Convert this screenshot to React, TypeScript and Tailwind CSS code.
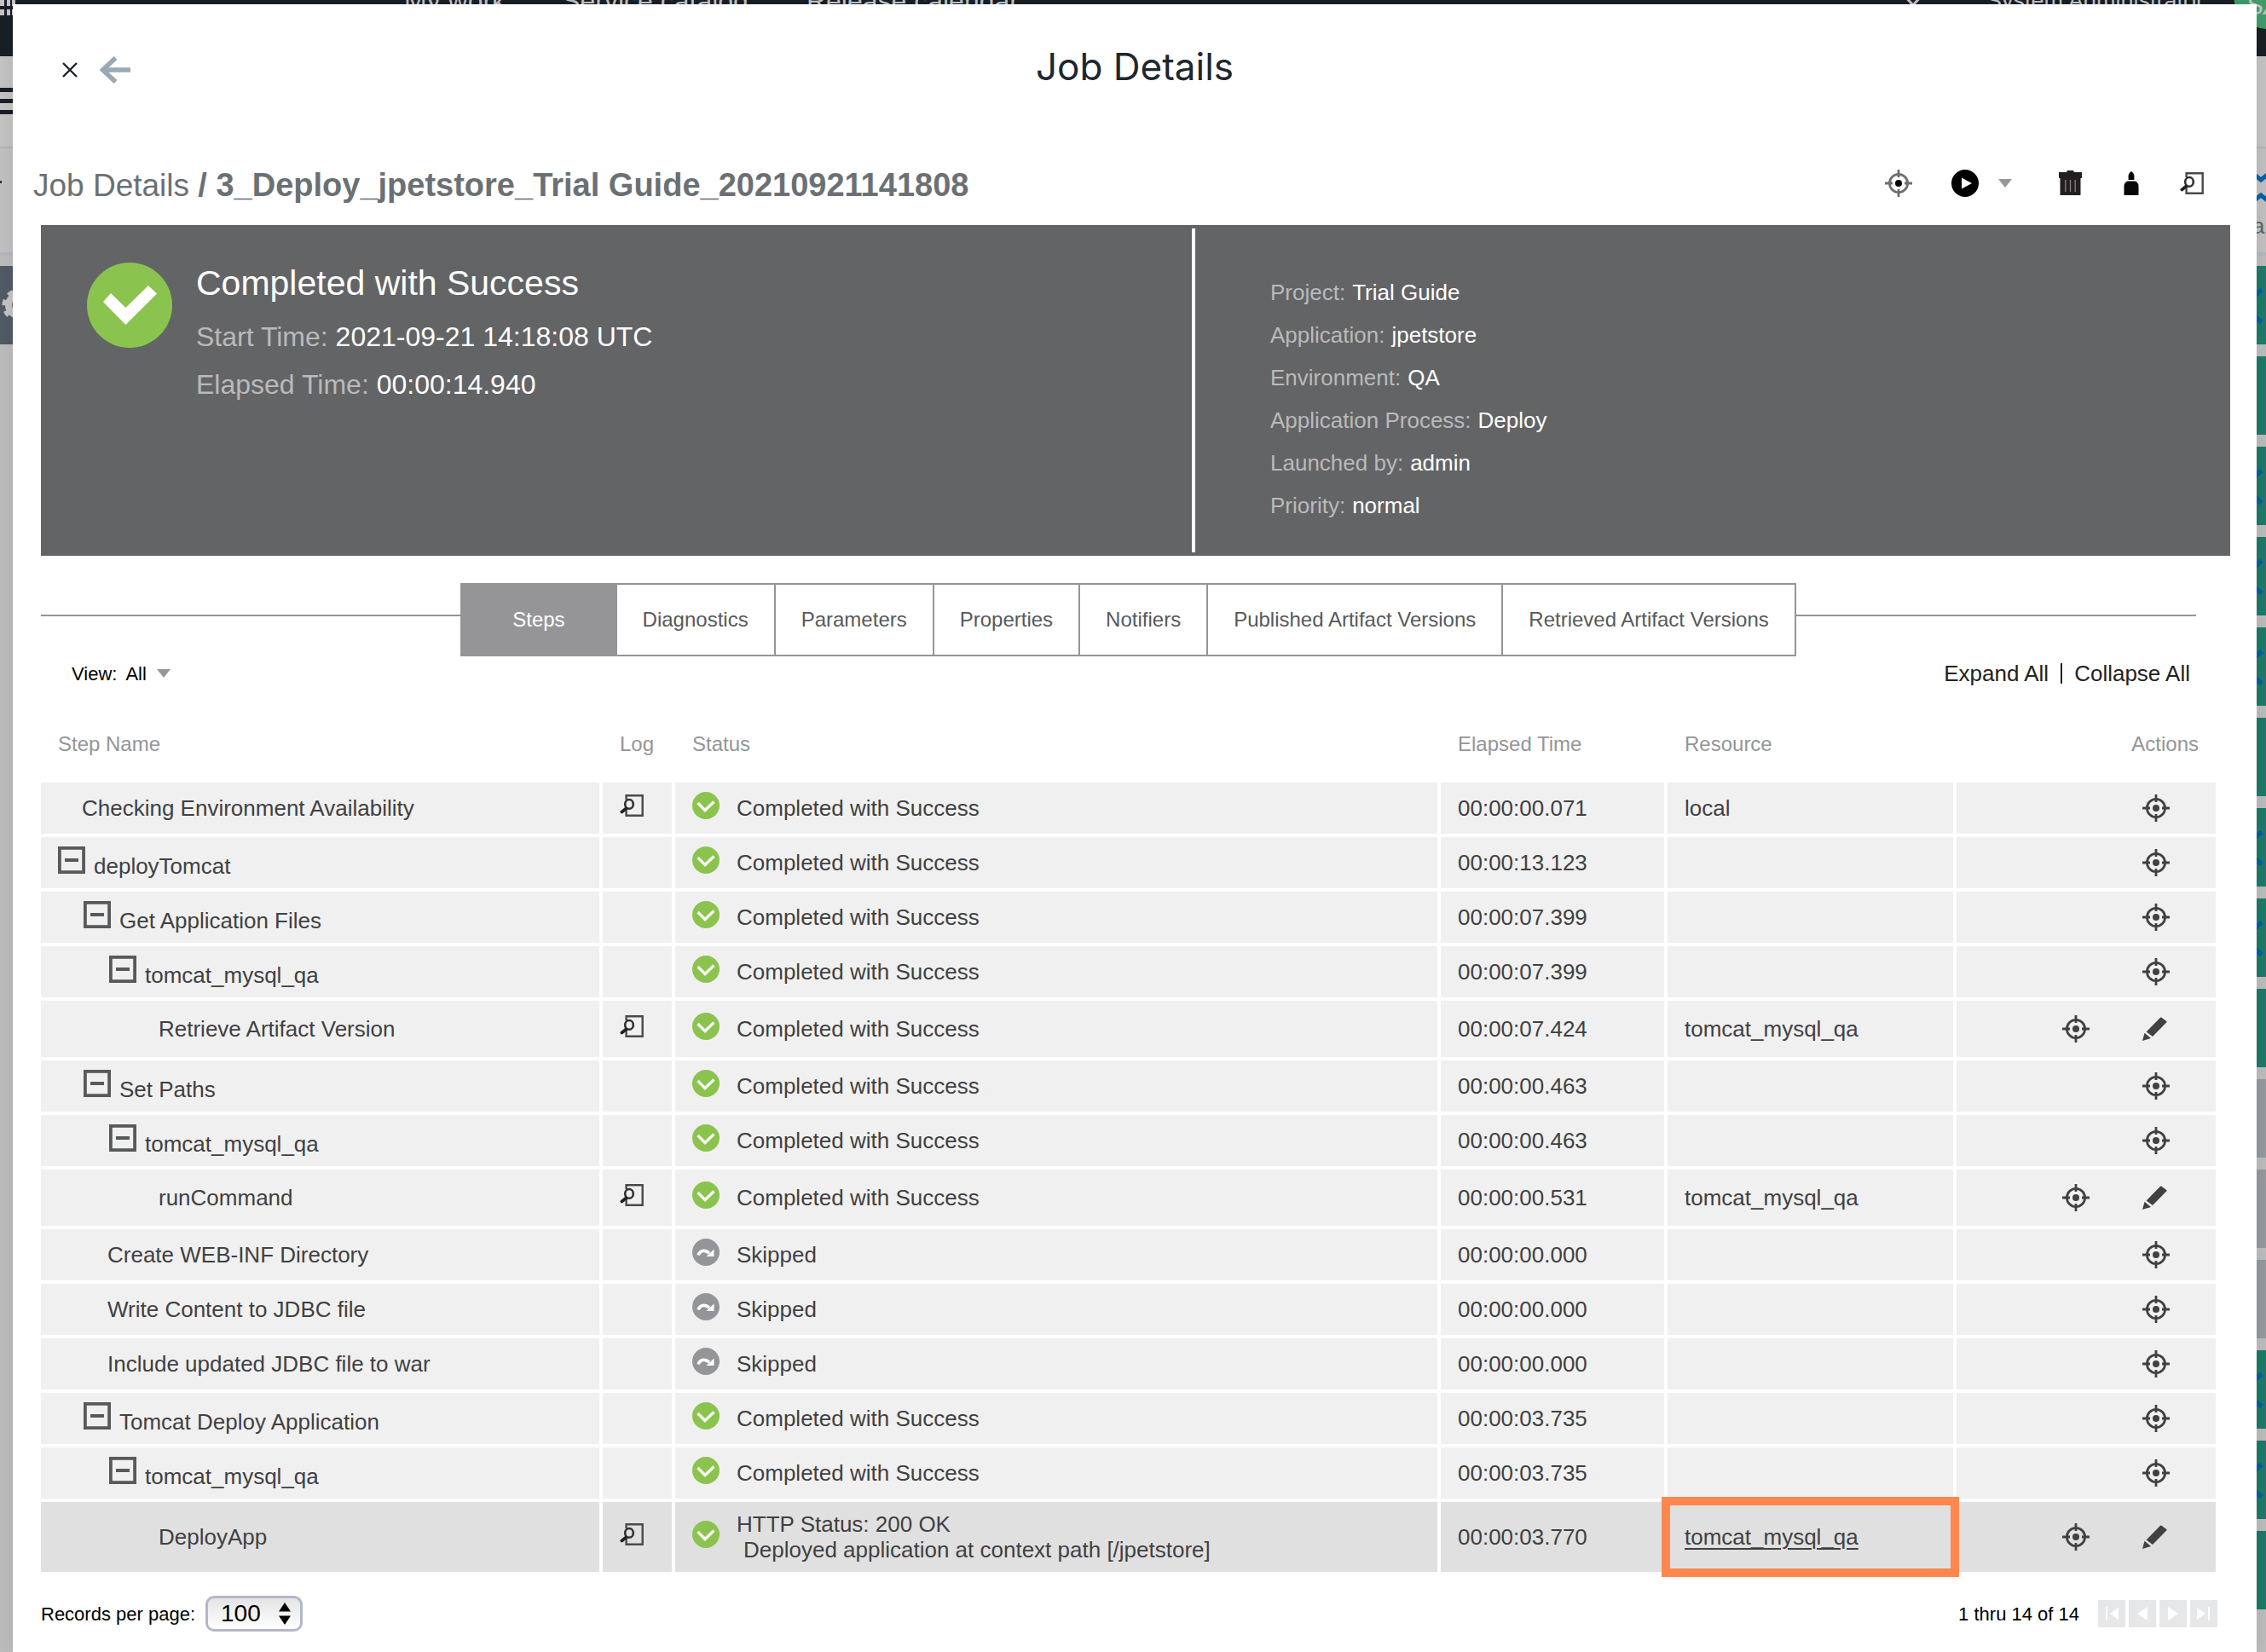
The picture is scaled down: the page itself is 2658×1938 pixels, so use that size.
import type { ReactNode } from "react";

type Step = {
  name: string;
  level: number;
  group?: boolean;
  log?: boolean;
  status: "success" | "skipped";
  message?: string[];
  elapsed: string;
  resource?: string;
  editable?: boolean;
  selected?: boolean;
};

const steps: Step[] = [
  { name: "Checking Environment Availability", level: 0, log: true, status: "success", elapsed: "00:00:00.071", resource: "local" },
  { name: "deployTomcat", level: 0, group: true, status: "success", elapsed: "00:00:13.123" },
  { name: "Get Application Files", level: 1, group: true, status: "success", elapsed: "00:00:07.399" },
  { name: "tomcat_mysql_qa", level: 2, group: true, status: "success", elapsed: "00:00:07.399" },
  { name: "Retrieve Artifact Version", level: 3, log: true, status: "success", elapsed: "00:00:07.424", resource: "tomcat_mysql_qa", editable: true },
  { name: "Set Paths", level: 1, group: true, status: "success", elapsed: "00:00:00.463" },
  { name: "tomcat_mysql_qa", level: 2, group: true, status: "success", elapsed: "00:00:00.463" },
  { name: "runCommand", level: 3, log: true, status: "success", elapsed: "00:00:00.531", resource: "tomcat_mysql_qa", editable: true },
  { name: "Create WEB-INF Directory", level: 1, status: "skipped", elapsed: "00:00:00.000" },
  { name: "Write Content to JDBC file", level: 1, status: "skipped", elapsed: "00:00:00.000" },
  { name: "Include updated JDBC file to war", level: 1, status: "skipped", elapsed: "00:00:00.000" },
  { name: "Tomcat Deploy Application", level: 1, group: true, status: "success", elapsed: "00:00:03.735" },
  { name: "tomcat_mysql_qa", level: 2, group: true, status: "success", elapsed: "00:00:03.735" },
  {
    name: "DeployApp",
    level: 3,
    log: true,
    status: "success",
    message: ["HTTP Status: 200 OK", "Deployed application at context path [/jpetstore]"],
    elapsed: "00:00:03.770",
    resource: "tomcat_mysql_qa",
    editable: true,
    selected: true,
  },
];

const groupIndent = ["pl-[20px]", "pl-[50px]", "pl-[80px]", "pl-[110px]"];
const leafIndent = ["pl-[48px]", "pl-[78px]", "pl-[108px]", "pl-[138px]"];

const details: [string, string][] = [
  ["Project", "Trial Guide"],
  ["Application", "jpetstore"],
  ["Environment", "QA"],
  ["Application Process", "Deploy"],
  ["Launched by", "admin"],
  ["Priority", "normal"],
];

const tabs = [
  "Diagnostics",
  "Parameters",
  "Properties",
  "Notifiers",
  "Published Artifact Versions",
  "Retrieved Artifact Versions",
];

/* ---------- icons ---------- */

function Target({ ring = "#414042", dot = "#414042" }: { ring?: string; dot?: string }) {
  return (
    <svg viewBox="0 0 32 32" className="size-8 shrink-0" fill="none">
      <circle cx="16" cy="16" r="10.6" stroke={ring} strokeWidth="2.8" />
      <path d="M16 0v9M16 23v9M0 16h9M23 16h9" stroke={ring} strokeWidth="2.8" />
      <circle cx="16" cy="16" r="4" fill={dot} />
    </svg>
  );
}

function Pencil() {
  return (
    <svg viewBox="0 0 32 28" className="h-7 w-8 shrink-0" fill="#414042">
      <path d="M4.6 17.6 21 0.8Q21.8 0 22.6.8L28.2 5Q29 5.8 28.2 6.6L12 23Z" />
      <path d="M0 28 2.6 18.8 10 25Z" />
    </svg>
  );
}

function LogIcon() {
  return (
    <svg viewBox="0 0 28 26" className="h-[26px] w-7 shrink-0" fill="none">
      <path d="M7.6 6V1.3H26.7V24.7H7.6V18" stroke="#4a4a4a" strokeWidth="2.4" />
      <ellipse cx="11" cy="11.4" rx="4.8" ry="5.4" stroke="#333" strokeWidth="2.6" />
      <path d="M7.4 16.6 2.4 20.4" stroke="#222" strokeWidth="3.8" strokeLinecap="round" />
    </svg>
  );
}

function Trash() {
  return (
    <svg viewBox="0 0 29 30" className="h-[30px] w-[29px] shrink-0" fill="#231f20">
      <path d="M10.5 0h8v2H28v7H1V2h9.500Z" />
      <path d="M2.500 8h24v21h-24Z" />
      <path d="M8.800 11v14M14.500 11v14M20.200 11v14" stroke="#858384" strokeWidth="1.300" />
    </svg>
  );
}

function Bottle() {
  return (
    <svg viewBox="0 0 18 28" className="h-7 w-[18px] shrink-0" fill="#060606">
      <path d="M9 0C10.800 1 12 2.800 12.400 5V10H5.600V5C6 2.800 7.200 1 9 0Z" />
      <path d="M4.500 11.500h9Q17.500 13.500 17.500 17V28H.5V17Q.5 13.500 4.500 11.500Z" />
    </svg>
  );
}

function PlayIcon() {
  return (
    <svg viewBox="0 0 32 32" className="size-8 shrink-0">
      <circle cx="16" cy="16" r="16" />
      <path d="M12 9.500 24 16 12 22.500Z" fill="#fff" />
    </svg>
  );
}

function Caret() {
  return (
    <svg viewBox="0 0 16 10" className="h-2.5 w-4 shrink-0">
      <path d="M0 0h16L8 10Z" fill="#979797" />
    </svg>
  );
}

function StatusIcon({ status }: { status: Step["status"] }) {
  if (status === "skipped") {
    return (
      <svg viewBox="0 0 32 32" className="mb-1.5 size-8 shrink-0" fill="none">
        <circle cx="16" cy="16" r="16" fill="#939598" />
        <path d="M7 19.500C9 14 14.500 12.500 20 17" stroke="#fff" strokeWidth="3.600" />
        <path d="M25.500 12.500V21H16.500Z" fill="#fff" />
      </svg>
    );
  }
  return (
    <svg viewBox="0 0 32 32" className="mb-1.5 size-8 shrink-0" fill="none">
      <circle cx="16" cy="16" r="16" fill="#8bc34f" />
      <path d="M6.500 13 15 21.500 25.500 11.500" stroke="#f4f8ee" strokeWidth="3.400" />
    </svg>
  );
}

function CollapseBox() {
  return (
    <svg viewBox="0 0 32 32" className="size-8 shrink-0" fill="none">
      <rect x="1.900" y="1.900" width="28.200" height="28.200" stroke="#58595b" strokeWidth="3.800" />
      <path d="M8 16h16" stroke="#58595b" strokeWidth="4" />
    </svg>
  );
}

/* ---------- page behind the dialog ---------- */

const lanes = [
  "linked", "plain", "linked", "linked", "linked", "plain", "linked", "linked",
  "plain", "idle", "idle", "idle", "linked", "linked", "plain",
];

function Backdrop() {
  return (
    <div aria-hidden="true" className="absolute inset-0 flex flex-col overflow-hidden bg-[#bcbcbc]">
      <div className="flex h-[66px] shrink-0 items-start overflow-hidden bg-[#181f27] text-[32px] leading-8 text-[#c4c4c4]">
        <svg viewBox="0 0 18 18" className="size-[18px] shrink-0" fill="#c4c4c4">
          <path d="M0 0h5v7H0zM8 0h4v7H8zM14 0h4v7h-4zM0 11h5v7H0zM8 11h4v7H8zM14 11h4v7h-4z" />
        </svg>
        <span className="-mt-[15px] ml-[456px]">My work</span>
        <span className="-mt-[15px] ml-[66px]">Service catalog</span>
        <span className="-mt-[15px] ml-[68px]">Release calendar</span>
        <svg viewBox="0 0 30 16" className="-mt-2 ml-auto h-4 w-[30px] shrink-0" fill="none">
          <path d="M2 0 15 14 28 0" stroke="#c4c4c4" strokeWidth="3" />
        </svg>
        <span className="-mt-[15px] ml-[71px] shrink-0 text-[27px]">System Administrator</span>
        <div className="-mt-[46px] -mr-[42px] ml-[35px] flex size-20 shrink-0 items-end rounded-full bg-[#3f9c68] pb-3 pl-3.5">
          <span className="italic">SA</span>
        </div>
      </div>
      <div className="flex h-[108px] shrink-0 flex-col justify-center gap-2 border-b-2 border-[#b4b4b4] bg-[#c3c3c3] pb-px">
        <div className="h-[5px] w-10 bg-[#181f27]" />
        <div className="h-[5px] w-10 bg-[#181f27]" />
        <div className="h-[5px] w-10 bg-[#181f27]" />
      </div>
      <div className="flex h-[126px] shrink-0 justify-between border-b-4 border-[#b1b7bc] bg-[#c0c0c0]">
        <div className="mt-[38px] h-[3px] w-0.5 bg-[#333]" />
        <div className="flex w-[16px] flex-col overflow-hidden pt-[26px]">
          <svg viewBox="0 0 16 40" className="h-10 w-4 shrink-0" fill="none">
            <path d="M0 3 10 11 20 3M0 37 10 29 20 37" stroke="#0562a4" strokeWidth="5" />
          </svg>
          <span className="text-[26px] leading-[50px] text-[#5b646d]">ar</span>
        </div>
      </div>
      <div className="flex grow justify-between pt-3">
        <div className="flex h-[92px] w-10 items-center bg-[#525a65]">
          <svg viewBox="0 0 40 40" className="size-10" fill="none">
            <circle cx="22" cy="20" r="12" stroke="#c4c4c4" strokeWidth="8" />
            <circle cx="22" cy="20" r="17" stroke="#c4c4c4" strokeWidth="5" strokeDasharray="6.600 6.600" />
          </svg>
        </div>
        <div className="flex w-5 flex-col gap-3.5">
          {lanes.map((kind, i) => (
            <div key={i} className={kind === "idle" ? "h-[92px] bg-[#93999d]" : "h-[92px] bg-[#1e7a69]"}>
              {kind === "linked" && (
                <svg viewBox="0 0 20 92" className="h-full w-full" fill="none">
                  <path d="M5 36 15 28M5 58 15 66" stroke="#05609e" strokeWidth="6" />
                </svg>
              )}
            </div>
          ))}
        </div>
      </div>
    </div>
  );
}

/* ---------- dialog parts ---------- */

function IconButton({ label, children }: { label: string; children: ReactNode }) {
  return (
    <button type="button" aria-label={label} className="flex shrink-0 items-center justify-center">
      {children}
    </button>
  );
}

function Summary() {
  return (
    <section className="mr-[31px] ml-[33px] grid h-[388px] grid-cols-[1350fr_4px_1214fr] bg-[#636466] text-white">
      <div className="flex items-start gap-7 pt-10 pl-[54px]">
        <svg viewBox="0 0 100 100" className="mt-1 size-[100px] shrink-0">
          <circle cx="50" cy="50" r="50" fill="#8bc34f" />
          <path d="M19 46 28 36 45.400 53 72 27 82 36.500 45.400 73Z" fill="#fff" />
        </svg>
        <div className="text-[32px] leading-[56px]">
          <h2 className="mb-[7px] text-[41px] leading-[56px]">Completed with Success</h2>
          <p>
            <span className="text-[#b9babb]">Start Time:</span> 2021-09-21 14:18:08 UTC
          </p>
          <p>
            <span className="text-[#b9babb]">Elapsed Time:</span> 00:00:14.940
          </p>
        </div>
      </div>
      <div className="my-1 bg-white" />
      <dl className="pt-[54px] pl-[88px] text-[26px] leading-[50px]">
        {details.map(([label, value]) => (
          <div key={label} className="flex gap-2">
            <dt className="text-[#b9babb]">{label}:</dt>
            <dd>{value}</dd>
          </div>
        ))}
      </dl>
    </section>
  );
}

function TabBar() {
  return (
    <div className="mt-8 mr-[71px] ml-[33px] flex items-start">
      <div className="mt-[37px] h-0.5 flex-[492] bg-[#959597]" />
      <div role="tablist" className="flex h-[86px] border-y-2 border-[#959597] text-[24px] text-[#58595b]">
        <button type="button" role="tab" aria-selected="true" className="bg-[#959597] px-[61px] text-white">
          Steps
        </button>
        {tabs.map((tab) => (
          <button key={tab} type="button" role="tab" aria-selected="false" className="border-r-2 border-[#959597] px-[30px]">
            {tab}
          </button>
        ))}
      </div>
      <div className="mt-[37px] h-0.5 flex-[469] bg-[#959597]" />
    </div>
  );
}

function StepRow({ step }: { step: Step }) {
  const height = step.message ? "h-[86px]" : step.editable ? "h-[70px]" : "h-16";
  const cell = step.selected
    ? "border-b-4 border-r-4 border-white bg-[#e0e0e0] pl-5"
    : "border-b-4 border-r-4 border-white bg-[#f0f0f0] pl-5";
  const base = step.selected ? "border-b-4 border-white bg-[#e0e0e0]" : "border-b-4 border-white bg-[#f0f0f0]";
  return (
    <tr className={height}>
      <td className={`${base} border-r-4 ${step.group ? groupIndent[step.level] : leafIndent[step.level]}`}>
        {step.group ? (
          <button type="button" className="flex items-baseline gap-2.5">
            <CollapseBox />
            {step.name}
          </button>
        ) : (
          step.name
        )}
      </td>
      <td className={cell}>
        {step.log && (
          <div className="mb-1.5">
            <IconButton label="View log">
              <LogIcon />
            </IconButton>
          </div>
        )}
      </td>
      <td className={cell}>
        <div className="flex items-center gap-5">
          <StatusIcon status={step.status} />
          {step.message ? (
            <div>
              <p>{step.message[0]}</p>
              <p className="pl-2">{step.message[1]}</p>
            </div>
          ) : (
            <span>{step.status === "success" ? "Completed with Success" : "Skipped"}</span>
          )}
        </div>
      </td>
      <td className={cell}>{step.elapsed}</td>
      <td className={`relative ${cell}`}>
        {step.resource && (
          <a href="#resource" className={step.selected ? "underline decoration-2 underline-offset-4" : ""}>
            {step.resource}
          </a>
        )}
        {step.selected && (
          <div className="pointer-events-none absolute -inset-x-[7px] -inset-y-1.5 z-10 border-10 border-[#ff874d]" />
        )}
      </td>
      <td className={base}>
        <div className="flex items-center justify-end gap-[62px] pr-[54px]">
          <IconButton label="Locate step">
            <Target />
          </IconButton>
          {step.editable && (
            <IconButton label="Edit step">
              <Pencil />
            </IconButton>
          )}
        </div>
      </td>
    </tr>
  );
}

function StepsTable() {
  return (
    <div className="mr-[48px] ml-[33px]">
      <table className="w-full table-fixed border-separate border-spacing-0 text-[26px] leading-[30px] text-[#414042]">
        <colgroup>
          <col className="w-[659px]" />
          <col className="w-[85px]" />
          <col />
          <col className="w-[266px]" />
          <col className="w-[339px]" />
          <col className="w-[304px]" />
        </colgroup>
        <thead>
          <tr className="h-[90px] text-left text-[24px] text-[#939598]">
            <th className="pl-5 font-normal">Step Name</th>
            <th className="pl-5 font-normal">Log</th>
            <th className="pl-5 font-normal">Status</th>
            <th className="pl-5 font-normal">Elapsed Time</th>
            <th className="pl-5 font-normal">Resource</th>
            <th className="pr-5 text-right font-normal">Actions</th>
          </tr>
        </thead>
        <tbody>
          {steps.map((step, i) => (
            <StepRow key={i} step={step} />
          ))}
        </tbody>
      </table>
    </div>
  );
}

const pagers: { label: string; shape: string }[] = [
  { label: "First page", shape: "M9 8h2v16H9zM24 9v14L14 16z" },
  { label: "Previous page", shape: "M22 8v16L10 16z" },
  { label: "Next page", shape: "M10 8v16L22 16z" },
  { label: "Last page", shape: "M21 8h2v16h-2zM8 9v14L18 16z" },
];

function Footer() {
  return (
    <footer className="mt-6 mr-[46px] ml-[33px] flex items-center justify-between text-[22px] text-black">
      <div className="flex items-center gap-3">
        <label htmlFor="page-size">Records per page:</label>
        <div className="relative">
          <select
            id="page-size"
            defaultValue="100"
            className="block h-[42px] w-[114px] appearance-none rounded-[10px] border-[3px] border-[#b3b7c9] bg-linear-to-b from-[#e4e4e4] to-white pl-[15px] text-[28px] leading-[36px]"
          >
            <option>100</option>
          </select>
          <svg viewBox="0 0 14 26" className="pointer-events-none absolute top-2 right-3.5 h-[26px] w-3.5">
            <path d="M0 10.500h14L7 0ZM0 15.500h14L7 26Z" />
          </svg>
        </div>
      </div>
      <div className="flex items-center">
        <span className="mr-[22px]">1 thru 14 of 14</span>
        <div className="flex gap-1">
          {pagers.map((p) => (
            <button key={p.label} type="button" aria-label={p.label} className="size-8 bg-[#e6e7e9]">
              <svg viewBox="0 0 32 32" className="size-8" fill="#fff">
                <path d={p.shape} />
              </svg>
            </button>
          ))}
        </div>
      </div>
    </footer>
  );
}

export default function App() {
  return (
    <div className="relative flex min-h-screen flex-col pt-[5px] pr-[11px] pl-[15px] font-['Liberation_Sans',Arial,sans-serif]">
      <Backdrop />
      <main role="dialog" aria-label="Job Details" className="relative grow bg-white shadow-[0_0_20px_rgba(0,0,0,0.08)]">
        <header className="mb-[45px] grid h-[116px] grid-cols-[1fr_auto_1fr] items-center px-[58px] pt-[30px]">
          <div className="flex items-center gap-[26px] pt-2">
            <IconButton label="Close">
              <svg viewBox="0 0 18 18" className="size-[18px]" fill="none">
                <path d="M1 1 17 17M17 1 1 17" stroke="#1b232b" strokeWidth="2.400" />
              </svg>
            </IconButton>
            <IconButton label="Back">
              <svg viewBox="0 0 36 32" className="h-8 w-9" fill="none">
                <path d="M36 16H4M18.500 2 3.500 16 18.500 30" stroke="#9aa9b2" strokeWidth="5.600" />
              </svg>
            </IconButton>
          </div>
          <h1 className="font-['Inter',sans-serif] text-[44px] leading-[60px] text-[#1e262e]">Job Details</h1>
        </header>

        <div className="flex h-[98px] items-center justify-between pr-[62px] pl-[24px]">
          <h2 className="pt-1 text-[37px] leading-[44px] text-[#6b7074]">
            Job Details <b className="text-[38px] font-bold">/ 3_Deploy_jpetstore_Trial Guide_20210921141808</b>
          </h2>
          <div className="flex items-center">
            <IconButton label="Locate job">
              <Target ring="#6d6e70" dot="#000" />
            </IconButton>
            <div className="ml-[46px] flex items-center gap-[23px]">
              <IconButton label="Run">
                <PlayIcon />
              </IconButton>
              <IconButton label="Run options">
                <Caret />
              </IconButton>
            </div>
            <div className="ml-[54px] flex items-center gap-12">
              <IconButton label="Delete">
                <Trash />
              </IconButton>
              <IconButton label="Access control">
                <Bottle />
              </IconButton>
              <IconButton label="View log">
                <LogIcon />
              </IconButton>
            </div>
          </div>
        </div>

        <Summary />
        <TabBar />

        <div className="mr-[78px] ml-[69px] flex h-[58px] items-center justify-between pb-[18px]">
          <button type="button" className="flex items-center gap-3 text-[22px] text-black">
            <span className="flex gap-[10px]">
              <span>View:</span>
              <span>All</span>
            </span>
            <Caret />
          </button>
          <div className="flex items-center gap-3.5 text-[26px] leading-[30px] text-[#222]">
            <button type="button">Expand All</button>
            <div className="h-6 w-0.5 bg-[#222]" />
            <button type="button">Collapse All</button>
          </div>
        </div>

        <StepsTable />
        <Footer />
      </main>
    </div>
  );
}
